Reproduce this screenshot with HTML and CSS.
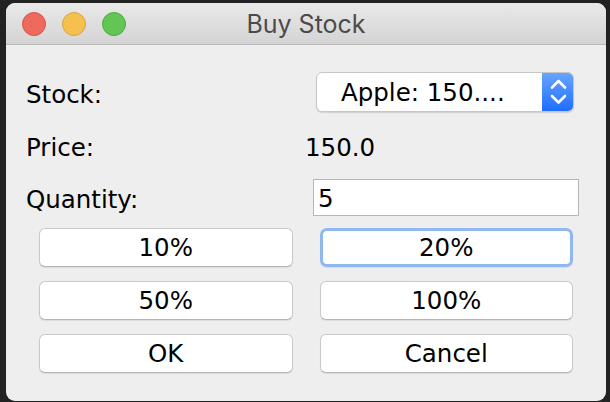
FILE: index.html
```html
<!DOCTYPE html>
<html>
<head>
<meta charset="utf-8">
<link rel="stylesheet" href="styles.css">
</head>
<body>
<div class="window">
  <div class="titlebar">
    <div class="lights">
      <span class="light red"></span>
      <span class="light yellow"></span>
      <span class="light green"></span>
    </div>
    <div class="title">Buy Stock</div>
    <div class="spacer"></div>
  </div>
  <div class="content">
    <div class="row row-stock">
      <span class="label label-stock">Stock:</span>
      <div class="combo">
        <span class="combo-text">Apple: 150....</span>
        <span class="combo-arrows">
          <svg width="32" height="40" viewBox="0 0 32 40">
            <path d="M10 15.5 L16.5 9 L23 15.5" fill="none" stroke="#fff" stroke-width="2.6" stroke-linecap="round" stroke-linejoin="round"/>
            <path d="M10 24 L16.5 30.5 L23 24" fill="none" stroke="#fff" stroke-width="2.6" stroke-linecap="round" stroke-linejoin="round"/>
          </svg>
        </span>
      </div>
    </div>
    <div class="row row-price">
      <span class="label label-price">Price:</span>
      <span class="value">150.0</span>
    </div>
    <div class="row row-qty">
      <span class="label label-qty">Quantity:</span>
      <div class="field">5</div>
    </div>
    <div class="buttons">
      <div class="btn">10%</div>
      <div class="btn focused">20%</div>
      <div class="btn">50%</div>
      <div class="btn">100%</div>
      <div class="btn">OK</div>
      <div class="btn">Cancel</div>
    </div>
  </div>
</div>
</body>
</html>
```
FILE: styles.css
```css
html, body {
  margin: 0;
  padding: 0;
  background: #222222;
}
body {
  width: 610px;
  height: 402px;
  overflow: hidden;
  font-family: "DejaVu Sans", sans-serif;
}
.window {
  margin: 3px 0 0 6px;
  width: 600px;
  height: 398px;
  border-radius: 9px;
  overflow: hidden;
  background: #eeeeee;
  display: flex;
  flex-direction: column;
}
.titlebar {
  height: 41px;
  flex: 0 0 41px;
  border-bottom: 1px solid #b8b8b8;
  background: linear-gradient(#e9e9e9, #d4d4d4);
  display: grid;
  grid-template-columns: 1fr auto 1fr;
  align-items: center;
}
.lights {
  display: flex;
  gap: 16px;
  padding-left: 16px;
}
.light {
  width: 22px;
  height: 22px;
  border-radius: 50%;
  display: block;
}
.red { background: #ee6a5f; border: 1px solid #d6544a; }
.yellow { background: #f6c04f; border: 1px solid #d9a33d; }
.green { background: #62c655; border: 1px solid #4ea83f; }
.title {
  font-family: Inter, "Liberation Sans", sans-serif;
  font-size: 25px;
  color: #4b4b4b;
  line-height: 41px;
  padding-top: 1px;
}
.content {
  padding-top: 27px;
  color: #000;
  font-size: 24.5px;
}
.row {
  display: flex;
  align-items: center;
  padding-left: 20px;
}
.label {
  display: block;
  line-height: 30px;
}
.row-stock { height: 40px; }
.label-stock { width: 290px; padding-top: 6px; }
.combo {
  box-sizing: border-box;
  width: 258px;
  height: 40px;
  background: #fff;
  border: 1px solid #c6c6c6;
  border-radius: 6px;
  box-shadow: 0 1px 1px rgba(0,0,0,0.12);
  display: flex;
  align-items: center;
  overflow: hidden;
}
.combo-text {
  flex: 1;
  padding-left: 24px;
  line-height: 30px;
  padding-top: 2px;
}
.combo-arrows {
  width: 32px;
  height: 40px;
  margin: -1px -1px -1px 0;
  background: linear-gradient(#6aa6ff, #1d6cff);
  display: block;
}
.combo-arrows svg { display: block; }
.row-price {
  margin-top: 21px;
  height: 30px;
}
.label-price { width: 279px; }
.value { line-height: 30px; }
.row-qty {
  margin-top: 16px;
  height: 37px;
}
.label-qty { width: 287px; padding-top: 4px; }
.field {
  box-sizing: border-box;
  width: 266px;
  height: 37px;
  background: #fff;
  border: 1px solid #b6b6b6;
  padding-left: 4px;
  line-height: 30px;
  padding-top: 4px;
}
.buttons {
  margin-top: 12px;
  padding: 0 33px;
  display: grid;
  grid-template-columns: 1fr 1fr;
  column-gap: 27px;
  row-gap: 14px;
}
.btn {
  box-sizing: border-box;
  height: 39px;
  background: #fff;
  border: 1px solid #c9c9c9;
  border-bottom-color: #b4b4b4;
  border-radius: 6px;
  box-shadow: 0 1px 1px rgba(0,0,0,0.08);
  text-align: center;
  line-height: 30px;
  padding-top: 4px;
}
.btn.focused {
  border: 3px solid #8fb8f1;
  border-radius: 7px;
  padding-top: 2px;
}
```
